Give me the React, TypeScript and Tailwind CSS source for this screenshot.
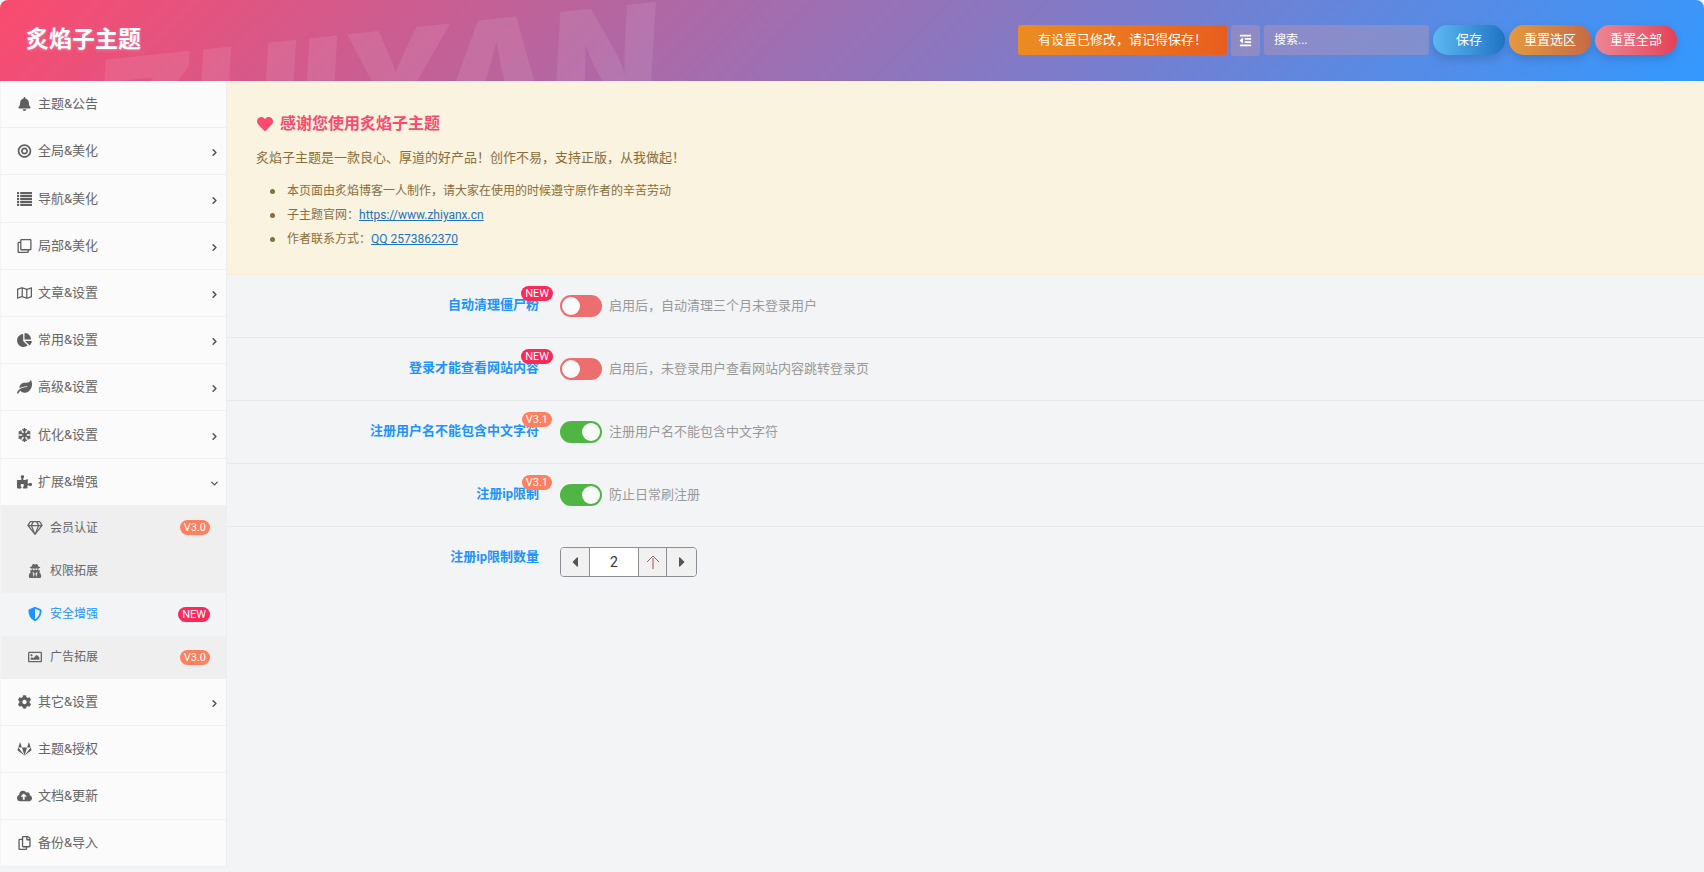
import React from "react";
import { ChevronDown, ChevronRight } from "lucide-react";
import {
  FaBell,
  FaBullseye,
  FaCaretLeft,
  FaCaretRight,
  FaChartPie,
  FaCloudUploadAlt,
  FaCog,
  FaGitlab,
  FaHeart,
  FaLeaf,
  FaOutdent,
  FaPuzzlePiece,
  FaRegClone,
  FaRegCopy,
  FaRegGem,
  FaRegImage,
  FaRegMap,
  FaShieldAlt,
  FaSnowflake,
  FaUserSecret,
} from "react-icons/fa";

const FONT = "font-['Roboto','Noto_Sans_CJK_SC',sans-serif]";

// five solid bars with little bullets, the list icon of the nav item
function ListBars({ className }: { className?: string }) {
  return (
    <svg viewBox="0 0 14 13" className={className} fill="currentColor">
      {[0, 2.75, 5.5, 8.25, 11].map((y) => (
        <g key={y}>
          <rect x="0" y={y} width="2" height="2" />
          <rect x="3" y={y} width="11" height="2" />
        </g>
      ))}
    </svg>
  );
}

const topMenu = [
  { title: "主题&公告", icon: FaBell, arrow: false, h: "h-[47px]" },
  { title: "全局&美化", icon: FaBullseye, arrow: true, h: "h-[47px]" },
  { title: "导航&美化", icon: ListBars, arrow: true, h: "h-[48px]" },
  { title: "局部&美化", icon: FaRegClone, arrow: true, h: "h-[47px]" },
  { title: "文章&设置", icon: FaRegMap, arrow: true, h: "h-[47px]" },
  { title: "常用&设置", icon: FaChartPie, arrow: true, h: "h-[47px]" },
  { title: "高级&设置", icon: FaLeaf, arrow: true, h: "h-[47px]" },
  { title: "优化&设置", icon: FaSnowflake, arrow: true, h: "h-[48px]" },
];

const subMenu = [
  { title: "会员认证", icon: FaRegGem, badge: "V3.0", active: false },
  { title: "权限拓展", icon: FaUserSecret, badge: "", active: false },
  { title: "安全增强", icon: FaShieldAlt, badge: "NEW", active: true },
  { title: "广告拓展", icon: FaRegImage, badge: "V3.0", active: false },
];

const bottomMenu = [
  { title: "其它&设置", icon: FaCog, arrow: true },
  { title: "主题&授权", icon: FaGitlab, arrow: false },
  { title: "文档&更新", icon: FaCloudUploadAlt, arrow: false },
  { title: "备份&导入", icon: FaRegCopy, arrow: false },
];

const settings = [
  { label: "自动清理僵尸粉", badge: "NEW", on: false, desc: "启用后\uFF0C自动清理三个月未登录用户" },
  { label: "登录才能查看网站内容", badge: "NEW", on: false, desc: "启用后\uFF0C未登录用户查看网站内容跳转登录页" },
  { label: "注册用户名不能包含中文字符", badge: "V3.1", on: true, desc: "注册用户名不能包含中文字符" },
  { label: "注册ip限制", badge: "V3.1", on: true, desc: "防止日常刷注册" },
];

function MenuRow({
  title,
  icon: Icon,
  arrow,
  open,
  h = "h-[47px]",
}: {
  title: string;
  icon: React.ComponentType<{ className?: string }>;
  arrow?: boolean;
  open?: boolean;
  h?: string;
}) {
  return (
    <div className={`${h} flex items-center border-b border-[#f0f0f0] pl-[16px] pr-[6px] text-[13px] text-[#666]`}>
      <span className="flex w-[14px] justify-center">
        <Icon className="h-[14px] w-[15px] shrink-0 text-[#5f5f5f]" />
      </span>
      <span className="ml-[7px] flex-1">{title}</span>
      {arrow && <ChevronRight className="mt-[3px] h-[11px] w-[11px] text-[#555]" strokeWidth={3.5} />}
      {open && <ChevronDown className="mt-[2px] h-[11px] w-[11px] text-[#555]" strokeWidth={3} />}
    </div>
  );
}

function Badge({ text, className = "" }: { text: string; className?: string }) {
  const color = text === "NEW" ? "bg-[#f9295b]" : "bg-[#ff7f5e]";
  return (
    <span className={`${color} inline-flex h-[15px] items-center rounded-full px-[4px] text-[11px] font-normal leading-none text-white ${className}`}>
      {text}
    </span>
  );
}

function Toggle({ on }: { on: boolean }) {
  return (
    <div className={`flex h-[22px] w-[42px] items-center rounded-full px-[2px] ${on ? "justify-end bg-[#4fb543]" : "justify-start bg-[#ec6e6e]"}`}>
      <span className="h-[18px] w-[18px] rounded-full bg-[#fafafa]" />
    </div>
  );
}

function Spinner() {
  const cell = "flex w-[29px] items-center justify-center bg-[#f1f1f1] text-[#555]";
  return (
    <div className="flex h-[30px] w-[137px] overflow-hidden rounded-[4px] border border-[#8a8f96]">
      <span className={`${cell} border-r border-[#8a8f96]`}>
        <FaCaretLeft className="h-[16px] w-[16px]" />
      </span>
      <span className="flex flex-1 items-center justify-center bg-white text-[14px] text-[#333]">2</span>
      <span className={`${cell} border-x border-[#8a8f96]`}>
        <svg viewBox="0 0 14 14" className="h-[14px] w-[14px]" fill="none" strokeWidth="1">
          <path d="M1 7 L7 1 L13 7" stroke="#7a6a5a" />
          <path d="M7 3 V14" stroke="#b04a5e" />
        </svg>
      </span>
      <span className={cell}>
        <FaCaretRight className="h-[16px] w-[16px]" />
      </span>
    </div>
  );
}

function Bullet({ children }: { children: React.ReactNode }) {
  return (
    <li className="flex items-center">
      <span className="mr-[12px] h-[5px] w-[5px] rounded-full bg-[#8a6d3b]" />
      <span>{children}</span>
    </li>
  );
}

export default function App() {
  return (
    <div className={`${FONT} flex h-[872px] w-[1704px] flex-col overflow-hidden bg-[#f3f4f6]`}>
      {/* Header */}
      <header className="relative flex h-[81px] shrink-0 items-center justify-between overflow-hidden rounded-t-[8px] bg-[linear-gradient(135deg,#fb4a6e_0%,#3399ff_100%)] pl-[26px] pr-[27px]">
        <span className="pointer-events-none absolute left-[86px] top-[42px] origin-top-left -rotate-[6deg] font-['Inter',sans-serif] text-[142px] font-black italic leading-none text-white/[0.09]">
          ZHIYAN
        </span>
        <h1 className="relative text-[23px] font-bold text-white [text-shadow:0_1px_3px_rgba(255,255,255,0.3)]">炙焰子主题</h1>
        <div className="relative flex items-start gap-[4px] text-[13px] text-white">
          <div className="flex h-[30px] w-[209px] items-center justify-center rounded-[3px] bg-linear-to-r from-[#ec8c20] to-[#e85d1e]">
            {"有设置已修改\uFF0C请记得保存\uFF01"}
          </div>
          <div className="flex h-[31px] w-[29px] items-center justify-center rounded-[3px] bg-[#e59b9d]/30">
            <FaOutdent className="h-[13px] w-[13px]" />
          </div>
          <div className="flex h-[30px] w-[165px] items-center rounded-[3px] bg-[#e59b9d]/30 pl-[10px] text-[12px]">搜索...</div>
          <div className="flex h-[30px] w-[72px] items-center justify-center rounded-full bg-linear-to-r from-[#5cb8f0] to-[#1f74c4] shadow-[0_4px_10px_rgba(0,0,0,0.15)]">
            保存
          </div>
          <div className="flex h-[30px] w-[82px] items-center justify-center rounded-full bg-linear-to-r from-[#e49a3e] to-[#c66a45] shadow-[0_4px_10px_rgba(0,0,0,0.15)]">
            重置选区
          </div>
          <div className="flex h-[30px] w-[82px] items-center justify-center rounded-full bg-linear-to-r from-[#ea8696] to-[#e23f58] shadow-[0_4px_10px_rgba(0,0,0,0.15)]">
            重置全部
          </div>
        </div>
      </header>

      <div className="flex flex-1">
        {/* Sidebar */}
        <aside className="ml-[1px] h-[786px] w-[226px] shrink-0 border-r border-[#eeeeee] bg-[#fbfbfb]">
          {topMenu.map((item) => (
            <MenuRow key={item.title} title={item.title} icon={item.icon} arrow={item.arrow} h={item.h} />
          ))}
          <MenuRow title="扩展&增强" icon={FaPuzzlePiece} open />
          {subMenu.map((item) => (
            <div
              key={item.title}
              className={`flex h-[43.25px] items-center pl-[26px] pr-[16px] text-[12px] ${
                item.active ? "bg-[#f3f4f6] text-[#1c93ff]" : "bg-[#efefef] text-[#666]"
              }`}
            >
              <span className="flex w-[16px] justify-center">
                <item.icon className="h-[14px] w-[16px] shrink-0" />
              </span>
              <span className="ml-[7px] flex-1">{item.title}</span>
              {item.badge && <Badge text={item.badge} className="px-[3px]" />}
            </div>
          ))}
          {bottomMenu.map((item) => (
            <MenuRow key={item.title} title={item.title} icon={item.icon} arrow={item.arrow} />
          ))}
        </aside>

        {/* Content */}
        <main className="flex-1">
          <section className="h-[194px] border-b border-[#f5ecd2] bg-[#f9f3e0] pl-[29px] pt-[35px] text-[#8a6d3b]">
            <h2 className="flex h-[16px] items-center text-[16px] font-bold leading-none text-[#fb4a6e]">
              <FaHeart className="ml-[1px] mr-[7px] h-[16px] w-[16px]" />
              感谢您使用炙焰子主题
            </h2>
            <p className="mt-[16px] text-[13px] leading-[20px]">
              {"炙焰子主题是一款良心、厚道的好产品\uFF01创作不易\uFF0C支持正版\uFF0C从我做起\uFF01"}
            </p>
            <ul className="mt-[11px] pl-[14px] text-[12px] leading-[24px]">
              <Bullet>{"本页面由炙焰博客一人制作\uFF0C请大家在使用的时候遵守原作者的辛苦劳动"}</Bullet>
              <Bullet>
                {"子主题官网\uFF1A"}
                <span className="text-[#1e73be] underline">https://www.zhiyanx.cn</span>
              </Bullet>
              <Bullet>
                {"作者联系方式\uFF1A"}
                <span className="text-[#1e73be] underline">QQ 2573862370</span>
              </Bullet>
            </ul>
          </section>

          {settings.map((row) => (
            <div key={row.label} className="flex h-[63px] items-center border-b border-[#e8e9eb]">
              <div className="relative mb-[3px] w-[312px] text-right text-[13px] font-bold text-[#1c93ff]">
                {row.label}
                <Badge text={row.badge} className={`absolute -top-[9px] ${row.badge === "NEW" ? "-right-[14px]" : "-right-[13px]"}`} />
              </div>
              <div className="ml-[21px]">
                <Toggle on={row.on} />
              </div>
              <span className="ml-[7px] text-[13px] text-[#999]">{row.desc}</span>
            </div>
          ))}

          <div className="flex pt-[20px]">
            <div className="w-[312px] text-right text-[13px] font-bold text-[#1c93ff]">注册ip限制数量</div>
            <div className="ml-[21px]">
              <Spinner />
            </div>
          </div>
        </main>
      </div>
      <div className="h-[1px]" />
    </div>
  );
}
